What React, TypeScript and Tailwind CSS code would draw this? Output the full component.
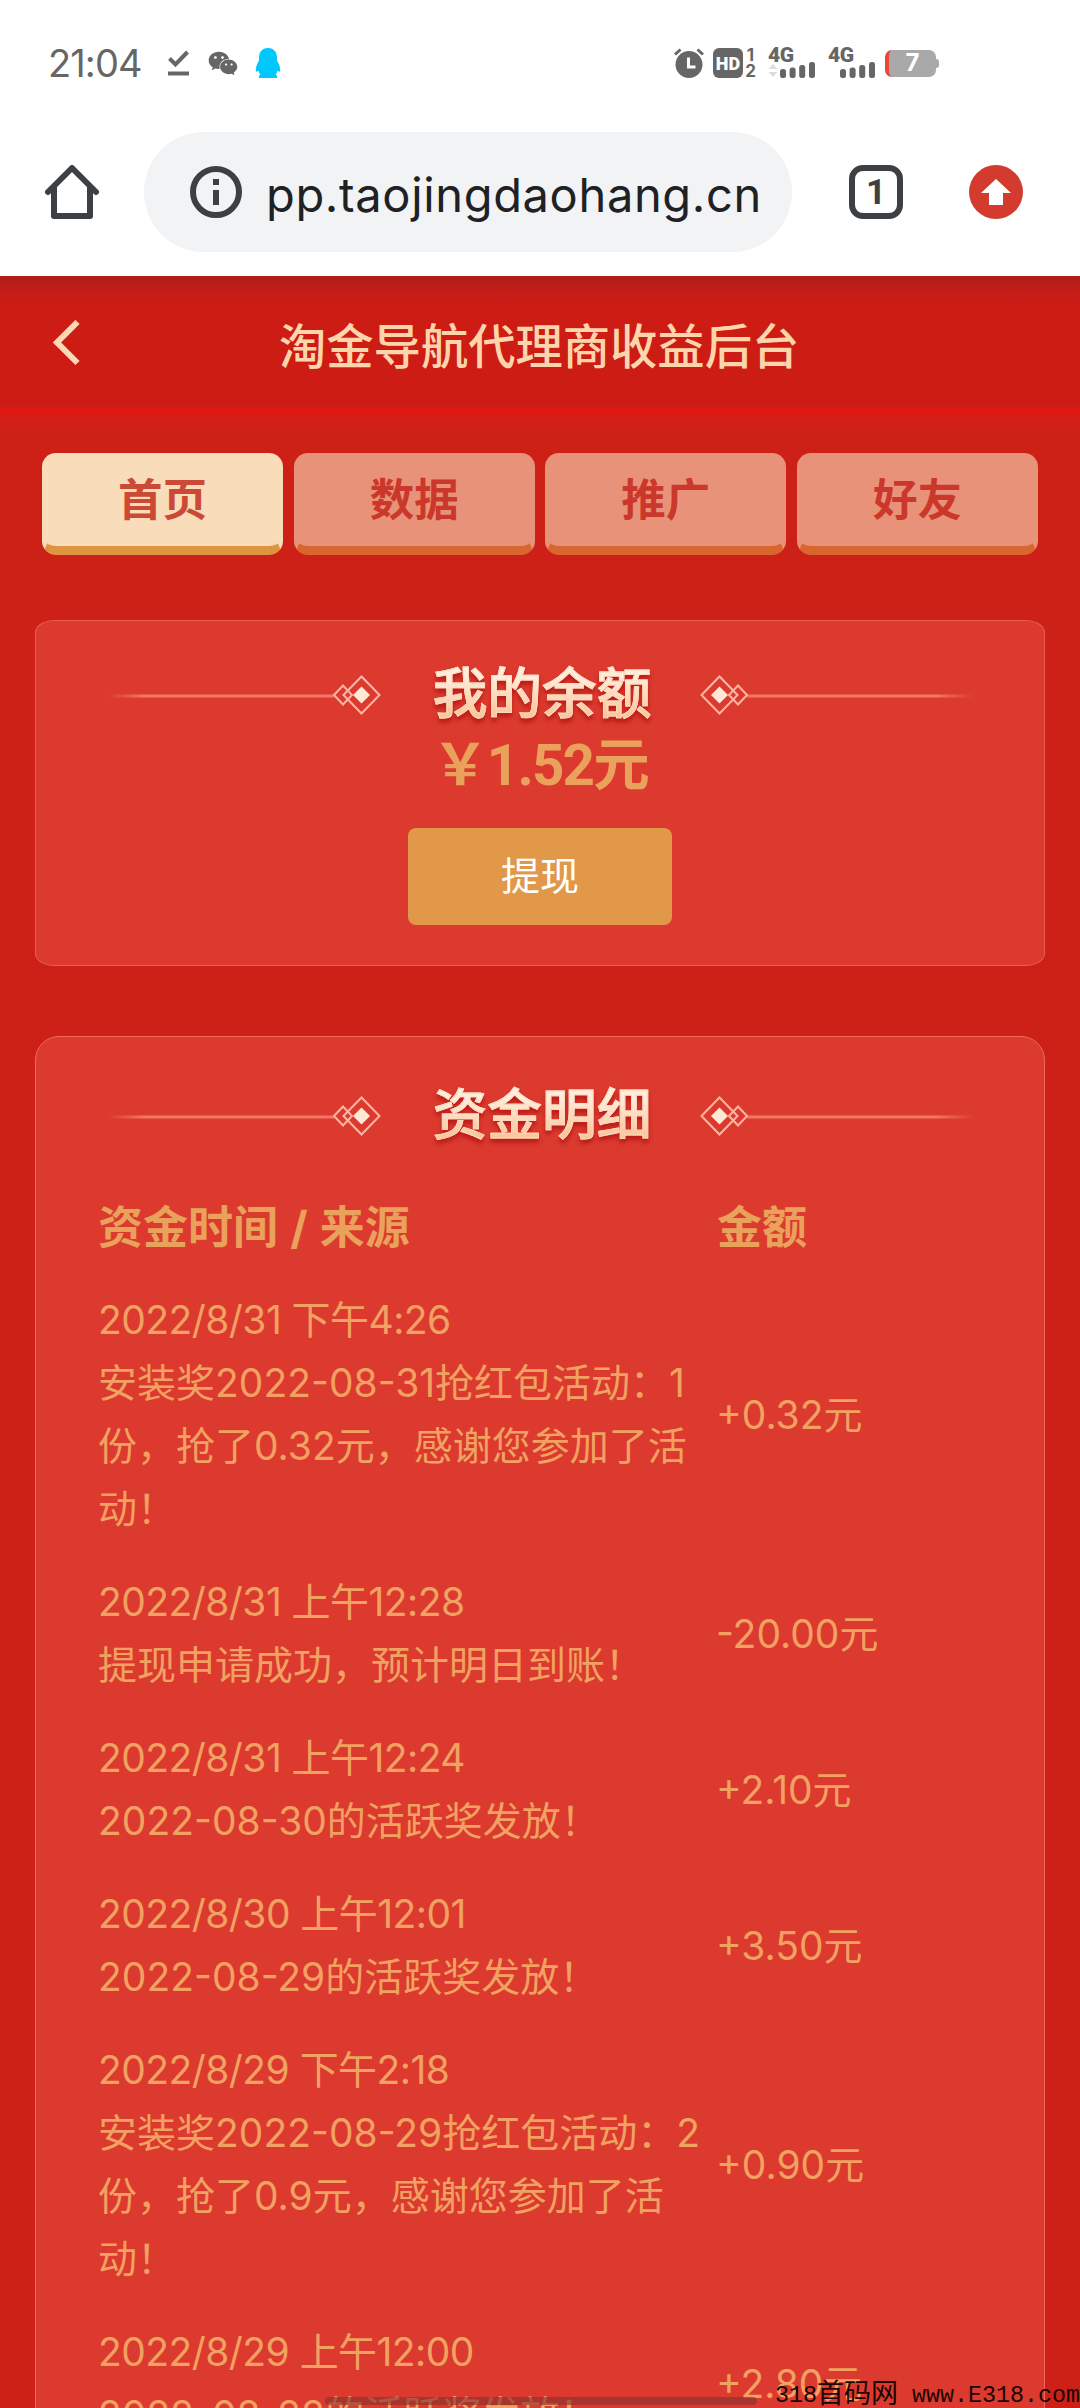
import React from 'react';
import { FaWeixin } from 'react-icons/fa';

const tabs = ['首页', '数据', '推广', '好友'];

const records = [
  {
    time: '2022/8/31 下午4:26',
    source: '安装奖2022-08-31抢红包活动：1\n份，抢了0.32元，感谢您参加了活\n动！',
    amount: '+0.32元',
  },
  { time: '2022/8/31 上午12:28', source: '提现申请成功，预计明日到账！', amount: '-20.00元' },
  { time: '2022/8/31 上午12:24', source: '2022-08-30的活跃奖发放！', amount: '+2.10元' },
  { time: '2022/8/30 上午12:01', source: '2022-08-29的活跃奖发放！', amount: '+3.50元' },
  {
    time: '2022/8/29 下午2:18',
    source: '安装奖2022-08-29抢红包活动：2\n份，抢了0.9元，感谢您参加了活\n动！',
    amount: '+0.90元',
  },
  { time: '2022/8/29 上午12:00', source: '2022-08-28的活跃奖发放！', amount: '+2.80元' },
];

const Signal: React.FC<{ arrows?: boolean }> = ({ arrows }) => (
  <div className="relative h-[30px] w-[48px] text-[#666]">
    <span className="absolute -top-[3px] left-0 font-[Roboto] text-[21px] leading-[20px] font-black tracking-[-0.5px]">4G</span>
    <svg className="absolute inset-0" width="48" height="30" viewBox="0 0 48 30" fill="currentColor">
      {arrows && <path d="M5 16l4.500 5h-9zM5 29l4.500-5h-9z" fill="#dcdcdc" />}
      <rect x="12" y="21" width="6" height="9" rx="2.500" />
      <rect x="21.600" y="19.500" width="6" height="10.500" rx="2.500" />
      <rect x="31.200" y="17" width="6" height="13" rx="2.500" />
      <rect x="41" y="14" width="6" height="16" rx="2.500" />
    </svg>
  </div>
);

const StatusBar: React.FC = () => (
  <div className="flex h-[126px] items-center pl-[48px]">
    <span className="w-[120px] text-[38px] leading-none tracking-[-0.9px] text-[#666]">21:04</span>
    <svg width="22" height="26" viewBox="0 0 22 26" fill="none" stroke="#666" strokeWidth="4">
      <path d="M1.500 8.500l6 6L19.500 2" />
      <path d="M0 23.500h21" />
    </svg>
    <FaWeixin className="ml-[18px] h-[29px] w-[30px] text-[#666]" />
    <svg className="ml-[17px]" width="26" height="31" viewBox="0 0 26 31" fill="#00c8ff">
      <path d="M13 0c6.200 0 9 4.500 9 9.500v3c1.800 3 3 6 3.200 9 .1 2.500-.7 3-2.600 1-.3 1.600-1 2.900-2 4 1.200.7 1.600 1.600 1.600 3.500H3.800c0-1.900.4-2.800 1.600-3.500-1-1.100-1.700-2.400-2-4-1.900 2-2.700 1.500-2.600-1 .2-3 1.400-6 3.200-9v-3C4 4.500 6.800 0 13 0z" />
    </svg>
    <div className="ml-auto flex items-center pr-[141px]">
      <svg width="30" height="30" viewBox="0 0 30 30">
        <circle cx="15" cy="16.500" r="13.500" fill="#666" />
        <path d="M1 6.500l5.500-5M29 6.500l-5.500-5" stroke="#666" strokeWidth="3" />
        <path d="M14.500 9.500v9.500h7" fill="none" stroke="#fff" strokeWidth="3" />
      </svg>
      <div className="ml-[9px] flex h-[30px] w-[30px] items-center justify-center rounded-[6px] bg-[#666] font-[Roboto] text-[18px] font-black text-white">
        HD
      </div>
      <div className="ml-[2px] flex h-[30px] w-[11px] flex-col items-center justify-between text-[17px] leading-[14px] font-bold text-[#666]">
        <span>1</span>
        <span>2</span>
      </div>
      <div className="ml-[12px]">
        <Signal arrows />
      </div>
      <div className="ml-[12px]">
        <Signal />
      </div>
      <div className="ml-[9px] flex items-center">
        <div className="flex h-[27px] w-[51px] items-center justify-center rounded-[7px] border-l-4 border-[#e5483c] bg-[#a9a9a9] text-[24px] leading-none font-bold text-white">
          7
        </div>
        <div className="h-[9px] w-[3px] rounded-r bg-[#a9a9a9]" />
      </div>
    </div>
  </div>
);

const AddressBar: React.FC = () => (
  <div className="flex h-[150px] items-start pt-[6px] pl-[45px]">
    <svg className="mt-[33px]" width="54" height="54" viewBox="0 0 54 54" fill="none" stroke="#3c4043" strokeWidth="6" strokeLinecap="round" strokeLinejoin="round">
      <path d="M3 27L27 3l24 24" />
      <path d="M9 23v28h36V23" />
    </svg>
    <div className="ml-[45px] flex h-[120px] w-[648px] items-center rounded-full bg-[#f1f3f4] pl-[46px]">
      <svg width="52" height="52" viewBox="0 0 52 52">
        <circle cx="26" cy="26" r="23" fill="none" stroke="#3c4043" strokeWidth="6" />
        <path d="M26 13v6M26 24v15" stroke="#3c4043" strokeWidth="6" />
      </svg>
      <span className="ml-[24px] pt-[5px] text-[47px] leading-none tracking-[0.65px] text-[#202124]">pp.taojingdaohang.cn</span>
    </div>
    <div className="mt-[33px] ml-[57px] flex h-[54px] w-[54px] items-center justify-center rounded-[14px] border-[6px] border-[#3c4043] font-[Roboto] text-[35px] leading-none font-bold text-[#3c4043]">
      1
    </div>
    <svg className="mt-[33px] ml-[66px]" width="54" height="54" viewBox="0 0 54 54">
      <circle cx="27" cy="27" r="27" fill="#d33b2e" />
      <path d="M27 14l15 14h-8v12H20V28h-8z" fill="#fff" />
    </svg>
  </div>
);

const Ornament: React.FC<{ flip?: boolean }> = ({ flip }) => (
  <svg className={flip ? '-scale-x-100' : ''} width="278" height="42" viewBox="0 0 278 42" fill="none">
    <defs>
      <linearGradient id="fade" x1="0" x2="1" y1="0" y2="0">
        <stop offset="0.020" stopColor="#f47665" stopOpacity="0" />
        <stop offset="0.180" stopColor="#f47665" />
        <stop offset="1" stopColor="#f47665" />
      </linearGradient>
    </defs>
    <rect x="0" y="20.500" width="231" height="3" fill="url(#fade)" />
    <path d="M231 21l9-9.500 9 9.500-9 9.500z" stroke="#ffb5a3" strokeWidth="2" />
    <path d="M240.500 21l18-18.500 18 18.500-18 18.500z" stroke="#ffb5a3" strokeWidth="2" />
    <path d="M250 21l8.500-8.500 8.500 8.500-8.500 8.500z" fill="#ffe9d6" />
  </svg>
);

const SectionTitle: React.FC<{ title: string }> = ({ title }) => (
  <div className="flex h-[60px] items-center justify-between pr-[66px] pl-[67px]">
    <Ornament />
    <h2 className="mb-[5px] ml-[3px] bg-gradient-to-b from-[#ffecdb] from-25% to-[#fbc79f] to-85% bg-clip-text text-[54.700px] leading-[60px] font-medium text-transparent drop-shadow-[0_4px_2px_rgba(170,15,10,0.7)] [-webkit-text-stroke:0.800px_#fddcc0]">
      {title}
    </h2>
    <Ornament flip />
  </div>
);

const App: React.FC = () => (
  <div className="relative h-[2408px] w-[1080px] overflow-hidden bg-[#cd2118] font-[Inter,'Noto_Sans_CJK_SC',sans-serif]">
    <div className="bg-white">
      <StatusBar />
      <AddressBar />
    </div>

    <header className="flex h-[131px] items-center bg-[linear-gradient(#ae1d1a,#c41d16_16px,#cd1c14_30px,#cd1c14)] pt-[2px] pl-[52px]">
      <svg width="28" height="46" viewBox="0 0 28 46" fill="none" stroke="#fbd9b5" strokeWidth="6">
        <path d="M25.500 2L5 22.500 25.500 43" />
      </svg>
      <h1 className="ml-[199px] pt-[8px] text-[47.300px] leading-none font-medium text-[#fdd5ac]">淘金导航代理商收益后台</h1>
    </header>
    <div className="h-[46px] bg-[linear-gradient(#e11712,#e01812_6px,#d61d15_9px,#cd2118_28px)]" />

    <nav className="flex gap-[10.700px] px-[42px]">
      {tabs.map((tab, index) => (
        <button
          key={tab}
          className={`h-[102px] flex-1 rounded-[14px] border-4 border-b-[9px] border-transparent pb-[3px] text-[44.500px] leading-none font-bold ${
            index === 0
              ? 'border-b-[#df953f] bg-[#f9dcb9] text-[#cc4a35]'
              : 'border-b-[#d9662e] bg-[#e8927a] text-[#cb382b]'
          }`}
        >
          {tab}
        </button>
      ))}
    </nav>

    <section className="mt-[65px] ml-[35px] h-[346px] w-[1010px] rounded-[20px/12px] border border-[#ec5b4d] bg-[#dc3a2f] pt-[44px]">
      <SectionTitle title="我的余额" />
      <div className="mt-[9px] text-center text-[56.500px] leading-[64px] font-bold tracking-[-1.800px] text-[#e9a15b] font-[Roboto,'Noto_Sans_CJK_SC',sans-serif]">
        ￥1.52元
      </div>
      <button className="mx-auto mt-[30px] block h-[97px] w-[264px] rounded-[8px] bg-[#e29849] text-[39px] text-white">提现</button>
    </section>

    <section className="mt-[70px] ml-[35px] h-[1500px] w-[1010px] rounded-[24px] border border-[#f0685a] bg-[#dc3a2f] pt-[49px]">
      <SectionTitle title="资金明细" />
      <div className="mt-[52px] flex pl-[62px] text-[45px] leading-[60px] font-bold text-[#e9a15b]">
        <span className="w-[619px] [word-spacing:1.500px]">资金时间 / 来源</span>
        <span>金额</span>
      </div>
      <div className="mt-[30px] flex flex-col gap-[30px] pl-[62px] text-[39px] leading-[63px] text-[#f1a161]">
        {records.map((record) => (
          <div key={record.time} className="flex items-center">
            <div className="w-[618px] whitespace-pre">
              <p className="tracking-[-0.550px]">{record.time}</p>
              <p>{record.source}</p>
            </div>
            <span>{record.amount}</span>
          </div>
        ))}
      </div>
    </section>

    {/* gesture bar */}
    <div className="absolute bottom-[3px] left-[325px] h-[8px] w-[432px] rounded-full bg-[#8a322c]/65" />
    <div className="absolute right-0 -bottom-[1px] flex items-center text-[23.330px] leading-[26px] whitespace-pre text-[#1c0503] font-['Liberation_Mono','Noto_Sans_CJK_SC',monospace]">
      <span>318</span>
      <span className="text-[27px]">首码网</span>
      <span> www.E318.com</span>
    </div>
  </div>
);

export default App;
